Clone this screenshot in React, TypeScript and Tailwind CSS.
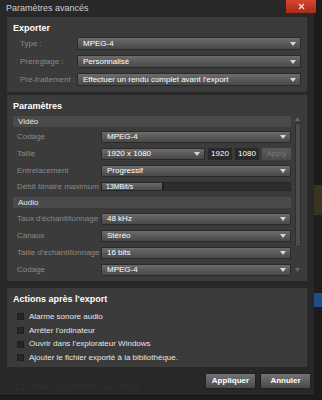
import React from "react";

const font = { fontFamily: '"Liberation Sans", Arial, sans-serif' };

const Caret = () => (
  <svg width="6" height="4" viewBox="0 0 6 4" className="shrink-0">
    <path d="M0 0h6L3 4z" fill="#d8d8d8" />
  </svg>
);

const Select = ({ value, h = "h-[13px]", className = "" }: { value: string; h?: string; className?: string }) => (
  <div
    className={`flex items-center justify-between ${h} pl-[5px] pr-[4px] rounded-[1px] border border-[#2a2a2a] bg-gradient-to-b from-[#6c6c6c] to-[#484848] text-white text-[8px] ${className}`}
  >
    <span className="leading-none">{value}</span>
    <Caret />
  </div>
);

const Row = ({ label, children, lw = "w-[57px]" }: { label: string; children: React.ReactNode; lw?: string }) => (
  <div className="flex items-center">
    <div className={`${lw} shrink-0 text-[8px] text-[#8a8a8a] whitespace-nowrap leading-none`}>{label}</div>
    <div className="flex-1">{children}</div>
  </div>
);

const SubHeader = ({ title }: { title: string }) => (
  <div className="h-[11px] bg-[#4a4a4a] pl-[5px] flex items-center text-[8px] text-[#e8e8e8] leading-none">{title}</div>
);

const Check = ({ label }: { label: string }) => (
  <div className="flex items-center gap-[5px] h-[13.7px]">
    <div className="w-[7px] h-[7px] bg-[#262626] border border-[#1e1e1e]" />
    <span className="text-[8px] text-[#e6e6e6] leading-none">{label}</span>
  </div>
);

export default function App() {
  return (
    <div className="w-[322px] h-[400px] flex bg-[#1c1c1c] overflow-hidden" style={font}>
      <div className="relative w-[314px] h-[396px] bg-[#282828] flex flex-col border-b border-[#151515]">
        {/* title bar */}
        <div className="h-[17px] pl-[6px] pt-[1px] flex items-center text-[9px] text-[#d0d0d0]">Paramètres avancés</div>
        <div className="absolute left-[286px] top-0 w-[30px] h-[13px] z-10 bg-gradient-to-b from-[#d8452c] to-[#a92b18] flex items-center justify-center">
          <svg width="7" height="7" viewBox="0 0 7 7">
            <path d="M1 1l5 5M6 1l-5 5" stroke="#f3dcd6" strokeWidth="1.4" />
          </svg>
        </div>

        {/* Exporter */}
        <div className="mx-[7px] h-[75px] bg-[#3b3b3b] pl-[13px] pr-[6px] pt-[7px] flex flex-col">
          <div className="text-[9px] font-bold text-white leading-none h-[13px] -ml-[7px]">Exporter</div>
          <div className="flex flex-col gap-[5px]">
            <Row label="Type :"><Select value="MPEG-4" /></Row>
            <Row label="Préréglage :"><Select value="Personnalisé" /></Row>
            <Row label="Pré-traitement :"><Select value="Effectuer un rendu complet avant l'export" /></Row>
          </div>
        </div>

        {/* Paramètres */}
        <div className="mx-[7px] mt-[3px] h-[186px] bg-[#3b3b3b] pl-[6px] pr-[6px] pt-[7px] flex flex-col">
          <div className="text-[9px] font-bold text-white leading-none h-[14px]">Paramètres</div>
          <div className="flex gap-[3px]">
            <div className="flex-1 flex flex-col">
              <SubHeader title="Vidéo" />
              <div className="flex flex-col gap-[5px] pl-[4px] pt-[4px]">
                <Row label="Codage" lw="w-[84px]"><Select value="MPEG-4" h="h-[12px]" /></Row>
                <Row label="Taille" lw="w-[84px]">
                  <div className="flex items-center gap-[3px]">
                    <Select value="1920 x 1080" h="h-[12px]" className="w-[104px]" />
                    <div className="w-[24px] h-[12px] bg-[#292929] text-white text-[8px] flex items-center justify-center leading-none">1920</div>
                    <div className="w-[24px] h-[12px] bg-[#292929] text-white text-[8px] flex items-center justify-center leading-none">1080</div>
                    <div className="flex-1 h-[12px] bg-gradient-to-b from-[#5a5a5a] to-[#4a4a4a] text-[#7a7a7a] text-[8px] flex items-center justify-center leading-none">Apply</div>
                  </div>
                </Row>
                <Row label="Entrelacement" lw="w-[84px]"><Select value="Progressif" h="h-[12px]" /></Row>
                <Row label="Débit binaire maximum" lw="w-[84px]">
                  <div className="flex h-[9px] bg-[#2e2e2e] border border-[#262626]">
                    <div className="w-[62px] h-full bg-gradient-to-b from-[#6a6a6a] to-[#4c4c4c] text-white text-[7px] leading-none flex items-center pl-[4px] border-r-2 border-[#1e1e1e]">13MBit/s</div>
                  </div>
                </Row>
              </div>
              <div className="mt-[6px]">
                <SubHeader title="Audio" />
              </div>
              <div className="flex flex-col gap-[5px] pl-[4px] pt-[5px]">
                <Row label="Taux d'échantillonnage" lw="w-[84px]"><Select value="48 kHz" h="h-[12px]" /></Row>
                <Row label="Canaux" lw="w-[84px]"><Select value="Stéréo" h="h-[12px]" /></Row>
                <Row label="Taille d'échantillonnage" lw="w-[84px]"><Select value="16 bits" h="h-[12px]" /></Row>
                <Row label="Codage" lw="w-[84px]"><Select value="MPEG-4" h="h-[12px]" /></Row>
              </div>
            </div>
            {/* scrollbar */}
            <div className="w-[7px] flex flex-col items-center pt-[1px]">
              <svg width="5" height="4" viewBox="0 0 5 4"><path d="M0 4L2.5 0 5 4z" fill="#6a6a6a" /></svg>
              <div className="w-[6px] h-[124px] mt-[2px] bg-[#4d4d4d] border border-[#2f2f2f] rounded-[1px]" />
              <div className="flex-1" />
              <svg width="5" height="4" viewBox="0 0 5 4" className="mb-[4px]"><path d="M0 0h5L2.5 4z" fill="#6a6a6a" /></svg>
            </div>
          </div>
        </div>

        {/* Actions */}
        <div className="mx-[7px] mt-[7px] h-[79px] bg-[#3b3b3b] pl-[6px] pt-[7px] flex flex-col">
          <div className="text-[9px] font-bold text-white leading-none h-[14px]">Actions après l'export</div>
          <div className="flex flex-col pl-[4px] pt-[1px]">
            <Check label="Alarme sonore audio" />
            <Check label="Arrêter l'ordinateur" />
            <Check label="Ouvrir dans l'explorateur Windows" />
            <Check label="Ajouter le fichier exporté à la bibliothèque." />
          </div>
        </div>

        {/* footer */}
        <div className="flex items-start mt-[6px] pl-[16px] pr-[3px]">
          <div className="flex items-center gap-[5px] mt-[10px] text-[8px] text-[#303030] leading-none">
            <div className="w-[7px] h-[7px] border border-[#2e2e2e]" />
            Utiliser ce paramètre par défaut
          </div>
          <div className="flex-1" />
          <div className="flex gap-[4px]">
            <div className="w-[51px] h-[16px] bg-gradient-to-b from-[#737373] to-[#4a4a4a] border border-[#202020] text-white text-[8px] font-bold flex items-center justify-center">Appliquer</div>
            <div className="w-[51px] h-[16px] bg-gradient-to-b from-[#737373] to-[#4a4a4a] border border-[#202020] text-white text-[8px] font-bold flex items-center justify-center">Annuler</div>
          </div>
        </div>
      </div>
      <div className="flex-1 flex flex-col">
        <div className="h-[185px] bg-[#1c1c1c]" />
        <div className="h-[30px] bg-[#3a3320]" />
        <div className="h-[78px] bg-[#1e1e1e]" />
        <div className="h-[14px] bg-[#1d4f86]" />
        <div className="flex-1 bg-[#1c1c1c]" />
      </div>
    </div>
  );
}
